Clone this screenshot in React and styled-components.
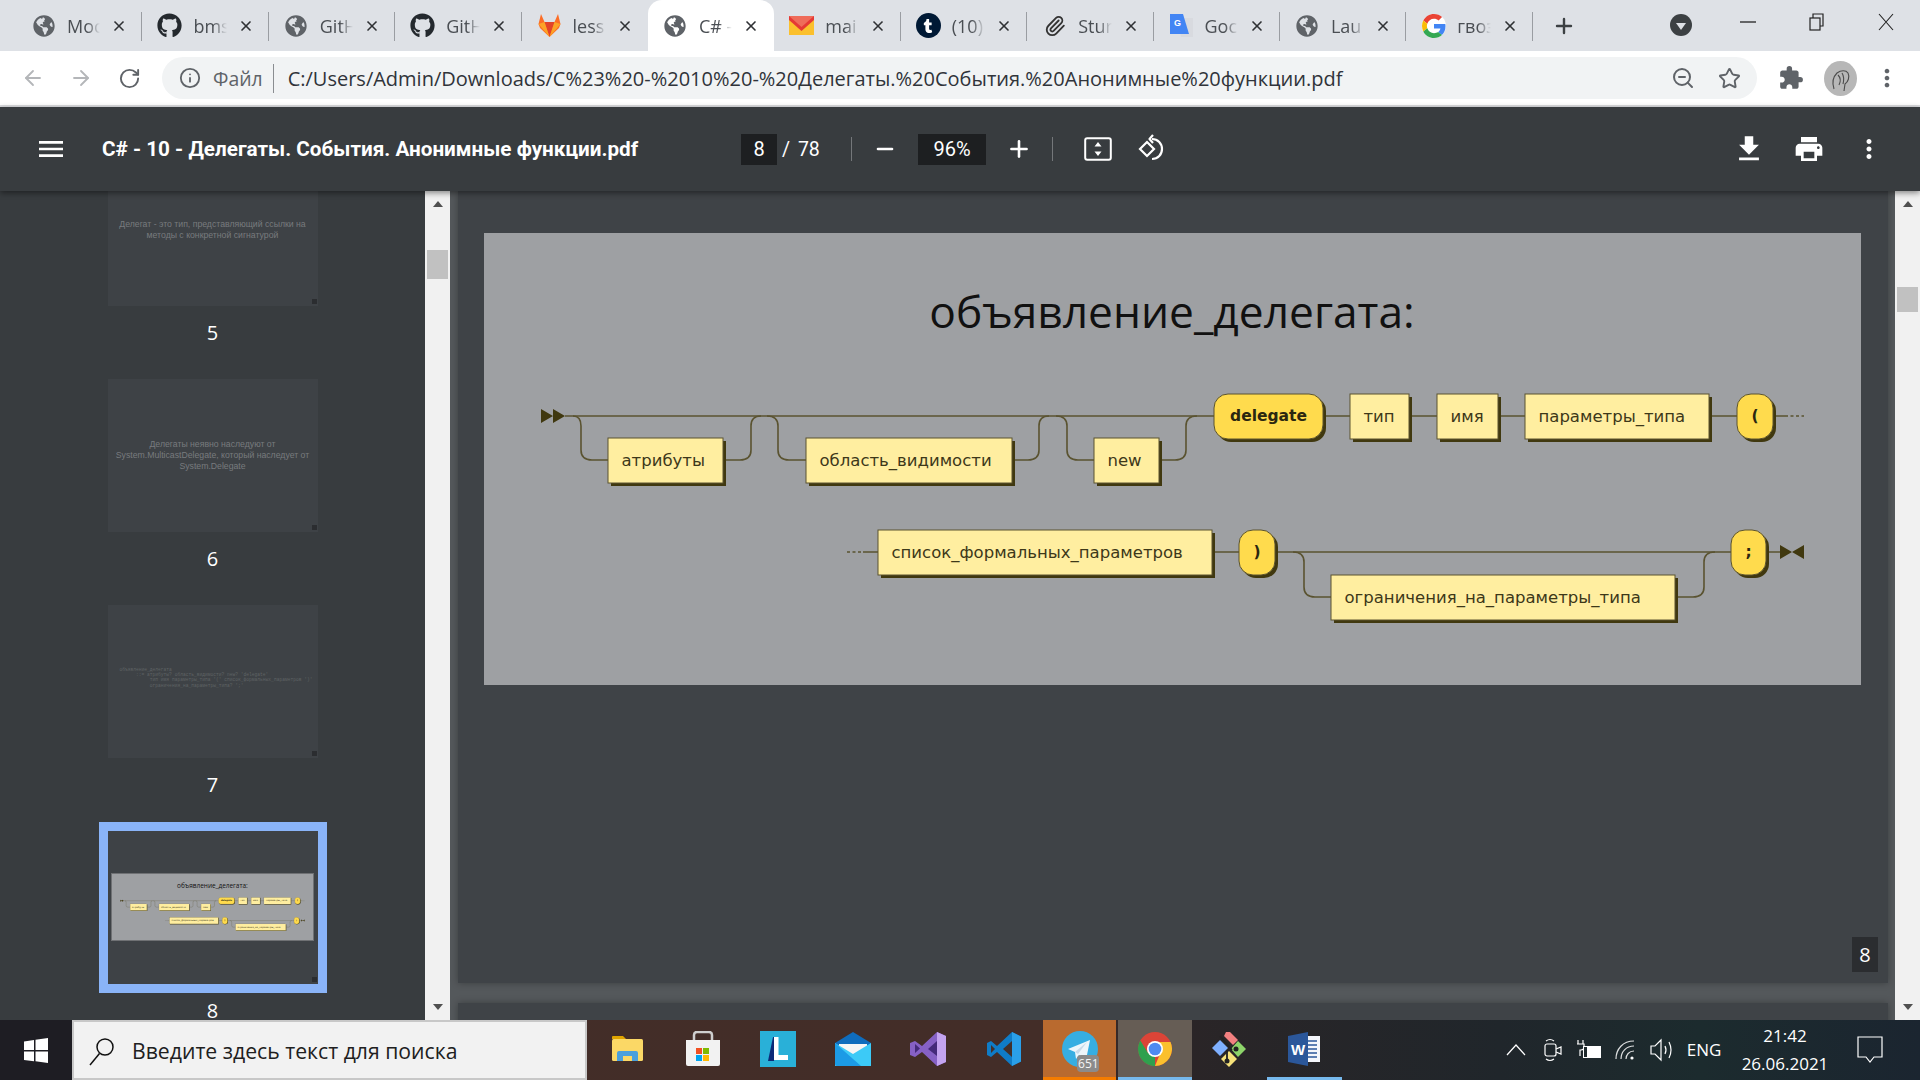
import styled, { createGlobalStyle } from "styled-components"
import { ArrowLeft, ArrowRight, RotateCw, Info, ZoomOut, Star, Plus, Minus, X, Paperclip } from "lucide-react"
import { FaGithub, FaGlobeAmericas, FaTumblr } from "react-icons/fa"
import { MdExtension, MdFileDownload, MdPrint, MdMoreVert, MdMenu } from "react-icons/md"

const Global = createGlobalStyle`
  html, body { margin: 0; padding: 0; height: 100%; overflow: hidden; background: #383c3f; }
  * { box-sizing: border-box; }
`

const Screen = styled.div`
  width: 1920px;
  height: 1080px;
  display: flex;
  flex-direction: column;
  overflow: hidden;
  font-family: "Open Sans", "Liberation Sans", sans-serif;
`

/* tabs */
const TabStrip = styled.div`
  height: 51px;
  flex: none;
  background: #dee1e6;
  display: flex;
  align-items: stretch;
  padding-left: 16px;
`
const Tab = styled.div`
  width: 126.4px;
  flex: none;
  position: relative;
  display: flex;
  align-items: center;
  gap: 11px;
  padding: 0 15px 0 15px;
  color: #4a4e53;
  font-size: 18px;
  background: ${p => (p.$active ? "#fff" : "transparent")};
  border-radius: ${p => (p.$active ? "14px 14px 0 0" : "0")};
  &::after {
    content: "";
    display: ${p => (p.$plain ? "none" : "block")};
    position: absolute;
    right: 0;
    top: 12px;
    height: 29px;
    width: 1px;
    background: #9a9da2;
  }
`
const TabIcon = styled.span`
  width: 25px;
  height: 25px;
  flex: none;
  display: flex;
  align-items: center;
  justify-content: center;
  color: ${p => p.$color || "#5f6368"};
`
const TabTitle = styled.span`
  flex: 1;
  min-width: 0;
  white-space: nowrap;
  -webkit-mask-image: linear-gradient(90deg, #000 60%, transparent 100%);
  mask-image: linear-gradient(90deg, #000 60%, transparent 100%);
`
const TabClose = styled(X)`
  flex: none;
  color: #2f3134;
`
const NewTab = styled.div`
  width: 62px;
  flex: none;
  display: flex;
  align-items: center;
  justify-content: center;
  color: #3c4043;
`
const TabSearch = styled.div`
  width: 22px;
  height: 22px;
  margin: 14px 0 0 75px;
  border-radius: 50%;
  background: #3c4043;
  display: flex;
  align-items: center;
  justify-content: center;
  flex: none;
  &::after {
    content: "";
    border-left: 5px solid transparent;
    border-right: 5px solid transparent;
    border-top: 7px solid #dee1e6;
    margin-top: 2px;
  }
`
const WindowButtons = styled.div`
  margin-left: auto;
  display: flex;
  align-items: flex-start;
  color: #222;
`
const WindowButton = styled.div`
  width: 69px;
  height: 44px;
  display: flex;
  align-items: center;
  justify-content: center;
`

/* address bar */
const NavBar = styled.div`
  height: 56px;
  flex: none;
  background: #fff;
  border-bottom: 2px solid #dcdde0;
  display: flex;
  align-items: center;
  padding-left: 9px;
`
const NavButton = styled.div`
  width: ${p => p.$w || 48}px;
  height: 40px;
  flex: none;
  display: flex;
  align-items: center;
  justify-content: center;
  color: ${p => p.$color || "#5f6368"};
`
const Omnibox = styled.div`
  width: 1595px;
  height: 42px;
  margin-left: 9px;
  flex: none;
  background: #f1f3f4;
  border-radius: 21px;
  display: flex;
  align-items: center;
  padding-left: 17px;
  padding-right: 4px;
  position: relative;
`
const InfoIcon = styled(Info)`
  color: #5f6368;
  flex: none;
`
const SchemeLabel = styled.span`
  margin-left: 12px;
  font-size: 19.4px;
  color: #5f6368;
  padding-right: 10px;
  border-right: 1px solid #8a8d91;
  line-height: 29px;
`
const Url = styled.span`
  margin-left: 14px;
  font-size: 20px;
  color: #30343a;
  white-space: nowrap;
  flex: 1;
`
const OmniIcon = styled.div`
  width: 47px;
  flex: none;
  display: flex;
  justify-content: center;
  color: #5f6368;
`
const NavRight = styled.div`
  display: flex;
  align-items: center;
  margin-left: 5px;
`

/* pdf toolbar */
const PdfBar = styled.div`
  height: 84px;
  flex: none;
  background: #383c3f;
  position: relative;
  z-index: 2;
  box-shadow: 0 2px 6px rgba(0, 0, 0, 0.45);
  display: flex;
  align-items: center;
  color: #fff;
  padding-left: 31px;
`
const BarIcon = styled.div`
  width: ${p => p.$w || 40}px;
  margin-left: ${p => p.$ml || 0}px;
  flex: none;
  display: flex;
  justify-content: center;
  align-items: center;
`
const DocTitle = styled.div`
  margin-left: 31px;
  width: 639px;
  flex: none;
  font-family: Roboto, "Liberation Sans", sans-serif;
  font-weight: 700;
  font-size: 20.7px;
  white-space: nowrap;
`
const DarkField = styled.div`
  width: ${p => p.$w}px;
  height: 31px;
  flex: none;
  background: #1d1f21;
  display: flex;
  align-items: center;
  justify-content: center;
  font-family: Roboto, "Liberation Sans", sans-serif;
  font-size: 20px;
`
const PageTotal = styled.div`
  width: 74px;
  flex: none;
  padding-left: 5px;
  font-family: Roboto, "Liberation Sans", sans-serif;
  font-size: 19.5px;
  word-spacing: 3px;
`
const BarDivider = styled.div`
  width: 1px;
  height: 24px;
  flex: none;
  background: #74777a;
`
const BarRight = styled.div`
  margin-left: auto;
  display: flex;
  align-items: center;
  padding-right: 21px;
`

/* content */
const Content = styled.div`
  flex: 1;
  min-height: 0;
  display: flex;
`
const Sidebar = styled.div`
  width: 425px;
  flex: none;
  background: #383c3f;
  overflow: hidden;
`
const ThumbList = styled.div`
  margin-top: -38px;
  display: flex;
  flex-direction: column;
  align-items: center;
`
const ThumbItem = styled.div`
  width: 228px;
  height: 226px;
  flex: none;
  display: flex;
  flex-direction: column;
  align-items: center;
`
const ThumbFrame = styled.div`
  width: 228px;
  height: 171px;
  margin-top: -9px;
  padding: 9px;
  background: ${p => (p.$selected ? "#8ab4f8" : "transparent")};
  flex: none;
`
const ThumbPage = styled.div`
  position: relative;
  height: 153px;
  background: #3e4246;
  display: flex;
  flex-direction: column;
  align-items: center;
  padding-top: ${p => p.$top || 0}px;
  text-align: center;
  font-family: "Liberation Sans", sans-serif;
  font-size: 8.7px;
  line-height: 11px;
  color: #787b7e;
  &::after {
    content: "";
    position: absolute;
    right: 1px;
    bottom: 2px;
    width: 5px;
    height: 5px;
    background: #2b2d30;
  }
`
const ThumbCode = styled.pre`
  margin: 0;
  align-self: flex-start;
  padding-left: 12px;
  text-align: left;
  font-family: "Liberation Mono", monospace;
  font-size: 4.6px;
  line-height: 5.2px;
  color: #5f6265;
`
const ThumbNumber = styled.div`
  margin-top: 9px;
  color: #fff;
  font-size: 20px;
  line-height: 18px;
  font-family: "Open Sans", sans-serif;
`
const ScrollTrack = styled.div`
  width: 25px;
  flex: none;
  background: #f1f1f1;
  display: flex;
  flex-direction: column;
  align-items: center;
`
const ArrowBox = styled.div`
  height: 26px;
  flex: none;
  display: flex;
  align-items: center;
  margin-top: ${p => (p.$down ? "auto" : "0")};
  &::after {
    content: "";
    border-left: 5.5px solid transparent;
    border-right: 5.5px solid transparent;
    ${p => (p.$down ? "border-top" : "border-bottom")}: 6px solid #505050;
  }
`
const ScrollThumb = styled.div`
  width: 21px;
  height: ${p => p.$h}px;
  margin-top: ${p => p.$top}px;
  background: #c1c1c1;
  flex: none;
`
const Viewer = styled.div`
  flex: 1;
  min-width: 0;
  background: #54585b;
  display: flex;
  flex-direction: column;
  gap: 20px;
  padding: 0 7px 0 8px;
  overflow: hidden;
`
const Page = styled.div`
  position: relative;
  height: ${p => (p.$h ? `${p.$h}px` : "auto")};
  flex: ${p => (p.$h ? "none" : "1")};
  background: #3f4347;
  box-shadow: 0 0 7px rgba(0, 0, 0, 0.3);
  padding: 42px 27px 0 26px;
`
const SlideBox = styled.div`
  background: #9ea0a3;
  line-height: 0;
`
const PageNumber = styled.div`
  position: absolute;
  right: 10px;
  bottom: 11px;
  width: 26px;
  height: 35px;
  background: #2b2d30;
  color: #fff;
  font-size: 20px;
  display: flex;
  align-items: center;
  justify-content: center;
`
const MiniSlide = styled.div`
  width: 203px;
  height: 68px;
  margin: 42px 0 0;
  background: #9ea0a3;
  border: 1px solid #6f7174;
  line-height: 0;
  flex: none;
`

/* diagram */
const BoxText = styled.text`
  font-family: "DejaVu Sans", sans-serif;
  font-size: ${p => (p.$bold ? 15.5 : 16.5)}px;
  font-weight: ${p => (p.$bold ? 700 : 400)};
  fill: ${p => (p.$bold ? "#2b2710" : "#3d3819")};
  text-anchor: ${p => (p.$bold ? "middle" : "start")};
  dominant-baseline: central;
`
const SlideTitle = styled.text`
  font-family: "Open Sans", "Liberation Sans", sans-serif;
  font-size: 44.3px;
  fill: #111;
  text-anchor: middle;
`

const FILL = "#ffeea0"
const TERM = "#ffdb4d"
const LINE = "#5a5330"
const SHADOW = "#40380f"

function Node({ x, y, w, h = 45, text, term, bold }) {
  const r = term ? 14 : 0
  return (
    <g>
      <rect x={x + 3} y={y + 3} width={w} height={h} rx={r} fill={SHADOW} />
      <rect x={x} y={y} width={w} height={h} rx={r} fill={term ? TERM : FILL} stroke={LINE} strokeWidth="1" />
      <BoxText x={bold ? x + w / 2 : x + 13.5} y={y + h / 2 - 0.5} $bold={bold}>{text}</BoxText>
    </g>
  )
}

function Diagram({ width, height }) {
  const wires = [
    "M565 416H1214",
    "M573 416Q581 416 581 426V450Q581 460 592 460H608",
    "M726 460H740Q751 460 751 450V426Q751 416 761 416",
    "M767 416Q778 416 778 426V450Q778 460 789 460H806",
    "M1015 460H1028Q1039 460 1039 450V426Q1039 416 1049 416",
    "M1056 416Q1067 416 1067 426V450Q1067 460 1078 460H1094",
    "M1162 460H1175Q1186 460 1186 450V426Q1186 416 1197 416",
    "M1326 416H1350M1412 416H1437M1501 416H1525M1712 416H1737M1776 416H1785",
    "M863 552H878M1215 552H1239M1278 552H1731M1769 552H1780",
    "M1293 552Q1304 552 1304 562V587Q1304 597 1315 597H1331",
    "M1678 597H1693Q1704 597 1704 587V562Q1704 552 1715 552",
  ]
  return (
    <svg width={width} height={height} viewBox="484 233 1377 452" style={{ display: "block" }}>
      <SlideTitle x="1172" y="328">объявление_делегата:</SlideTitle>
      <g fill="none" stroke={LINE} strokeWidth="1.6">
        {wires.map(d => <path key={d} d={d} />)}
        <path d="M1785 416H1804M847 552H863" strokeDasharray="3 2.5" />
      </g>
      <g fill={SHADOW}>
        <path d="M541 409L553 416L541 423Z M553 409L565 416L553 423Z" />
        <path d="M1780 545L1792 552L1780 559Z M1804 545L1792 552L1804 559Z" />
      </g>
      <Node x={608} y={438} w={115} text="атрибуты" />
      <Node x={806} y={438} w={206} text="область_видимости" />
      <Node x={1094} y={438} w={65} text="new" />
      <Node x={1214} y={394} w={109} text="delegate" term bold />
      <Node x={1350} y={394} w={59} text="тип" />
      <Node x={1437} y={394} w={61} text="имя" />
      <Node x={1525} y={394} w={184} text="параметры_типа" />
      <Node x={1737} y={394} w={36} text="(" term bold />
      <Node x={878} y={530} w={334} text="список_формальных_параметров" />
      <Node x={1239} y={530} w={36} text=")" term bold />
      <Node x={1331} y={575} w={344} text="ограничения_на_параметры_типа" />
      <Node x={1731} y={530} w={35} text=";" term bold />
    </svg>
  )
}

/* taskbar */
const Taskbar = styled.div`
  height: 60px;
  flex: none;
  display: flex;
  color: #fff;
  background: linear-gradient(90deg, #1e1d23 0, #1e1d23 72px, #422d28 72px, #432d28 1040px, #2a2527 1190px, #20262b 1500px, #1c2b2e 1700px, #1b2530 1920px);
`
const StartButton = styled.div`
  width: 72px;
  flex: none;
  display: flex;
  align-items: center;
  justify-content: center;
`
const SearchBox = styled.div`
  width: 515px;
  flex: none;
  background: #f2f2f2;
  border: 2px solid #c8c8c8;
  display: flex;
  align-items: center;
  padding: 1px 0 0 14px;
  gap: 16px;
  color: #202020;
  font-size: 21.2px;
`
const Apps = styled.div`
  display: flex;
  margin-left: 3px;
`
const AppSlot = styled.div`
  position: relative;
  width: 75.2px;
  flex: none;
  display: flex;
  align-items: center;
  justify-content: center;
  background: ${p => p.$bg || "transparent"};
  background-clip: padding-box;
  border-left: ${p => (p.$bg ? "2px solid transparent" : "0")};
  padding-bottom: 2px;
  &::after {
    content: "";
    display: ${p => (p.$bar ? "block" : "none")};
    position: absolute;
    left: 0;
    right: 0;
    bottom: 0;
    height: 3px;
    background: ${p => p.$bar};
  }
`
const Badge = styled.span`
  position: absolute;
  right: 17px;
  bottom: 8px;
  width: 22px;
  height: 17px;
  border-radius: 4px;
  background: #8b8b8b;
  color: #f5f5f5;
  font-size: 12px;
  line-height: 17px;
  text-align: center;
`
const Tray = styled.div`
  margin-left: auto;
  display: flex;
  padding-right: 22px;
`
const TraySlot = styled.div`
  width: ${p => p.$w || 37}px;
  flex: none;
  display: flex;
  flex-direction: column;
  align-items: center;
  justify-content: center;
  font-size: ${p => p.$size || 17}px;
  line-height: 28px;
  white-space: nowrap;
`
const TumblrBadge = styled.span`
  width: 25px;
  height: 25px;
  border-radius: 50%;
  background: #001935;
  display: flex;
  align-items: center;
  justify-content: center;
`

const Globe = () => <FaGlobeAmericas size={22} />

function GitlabIcon() {
  return (
    <svg width="25" height="25" viewBox="0 0 25 25">
      <path d="M12.5 24L3 15l-1.5-4L4 1l3.5 8h10L21 1l2.500 10-1.500 4z" fill="#fc6d26" />
      <path d="M12.500 24L7.500 9h10z" fill="#e24329" />
      <path d="M12.500 24L1.500 11l6-2zM12.500 24l11-13-6-2z" fill="#fca326" />
    </svg>
  )
}
function GmailIcon() {
  return (
    <svg width="25" height="25" viewBox="0 0 25 25">
      <rect x="0" y="3" width="25" height="19" fill="#fbc02d" />
      <path d="M0 3h25v4L12.500 18 0 7z" fill="#e53935" />
      <path d="M0 3l12.500 11L25 3z" fill="#ef6c5a" />
    </svg>
  )
}
function TranslateIcon() {
  return (
    <svg width="25" height="25" viewBox="0 0 25 25">
      <path d="M9 5h15v19H12z" fill="#d8dadf" />
      <path d="M1 1h13l6 20H1z" fill="#4285f4" />
      <text x="5" y="13" fontSize="9" fontWeight="700" fill="#fff" fontFamily="Liberation Sans">G</text>
    </svg>
  )
}
function GoogleIcon() {
  return (
    <svg width="24" height="24" viewBox="0 0 48 48">
      <circle cx="24" cy="24" r="24" fill="#fff" />
      <path fill="#EA4335" d="M24 9.500c3.500 0 6.700 1.200 9.200 3.600l6.900-6.900C35.900 2.400 30.500 0 24 0 14.600 0 6.500 5.400 2.600 13.200l8 6.200C12.400 13.700 17.700 9.500 24 9.500z" />
      <path fill="#4285F4" d="M47 24.500c0-1.600-.1-3.100-.4-4.500H24v9h12.900c-.6 3-2.200 5.500-4.800 7.200l7.700 6c4.500-4.200 7.200-10.400 7.200-17.700z" />
      <path fill="#FBBC05" d="M10.600 28.600c-.5-1.400-.8-3-.8-4.600s.3-3.200.8-4.600l-8-6.200C.9 16.500 0 20.100 0 24s.9 7.500 2.600 10.800z" />
      <path fill="#34A853" d="M24 48c6.500 0 11.900-2.100 15.900-5.800l-7.700-6c-2.200 1.400-4.900 2.300-8.200 2.300-6.300 0-11.600-4.200-13.400-9.900l-8 6.200C6.500 42.600 14.600 48 24 48z" />
    </svg>
  )
}
function RestoreIcon() {
  return (
    <svg width="16" height="18" viewBox="0 0 16 18" fill="none" stroke="#222" strokeWidth="1.2">
      <rect x="1" y="5" width="10" height="12" />
      <path d="M4 5V1h10v12h-3" />
    </svg>
  )
}
function CloseThin() {
  return (
    <svg width="18" height="18" viewBox="0 0 18 18" stroke="#222" strokeWidth="1.1"><path d="M2 1l14 16M16 1L2 17" /></svg>
  )
}
function MinimizeThin() {
  return <svg width="16" height="4" viewBox="0 0 16 4" stroke="#222" strokeWidth="1.3"><path d="M0 2h16" /></svg>
}
function FitIcon() {
  return (
    <svg width="28" height="24" viewBox="0 0 28 24" fill="none">
      <rect x="1.200" y="1.200" width="25.600" height="21.600" rx="2" stroke="#fff" strokeWidth="2" />
      <path d="M14 5l3.500 4.500h-7zM14 19l3.500-4.500h-7z" fill="#fff" />
    </svg>
  )
}
function RotateIcon() {
  return (
    <svg width="28" height="30" viewBox="0 0 28 30" fill="none" stroke="#fff" strokeWidth="2.200">
      <path d="M10 8l7 7-7 7-7-7z" />
      <path d="M15 5c6 0 10 4.500 10 10s-4 10-10 10" />
      <path d="M16 1l-3.500 4 3.500 4" strokeLinejoin="round" />
    </svg>
  )
}
function Avatar() {
  return (
    <svg width="33" height="35" viewBox="0 0 33 35">
      <ellipse cx="16.500" cy="17.500" rx="16.500" ry="17.500" fill="#b7b7b7" />
      <path d="M10 28c-2-6-1-12 3-16 4-3 9-3 11 0 2 4 0 9-3 11l-1 7M14 14c2 2 3 6 1 10M18 12c2 3 2 7 1 11" fill="none" stroke="#4b4b4b" strokeWidth="1.100" />
    </svg>
  )
}
function WindowsLogo() {
  return (
    <svg width="24" height="25" viewBox="0 0 24 25" fill="#fff">
      <path d="M0 3.500L10 2v10H0zM11.500 1.800L24 0v12H11.500zM0 13.500h10v9.800L0 22zM11.500 13.500H24V25l-12.500-1.800z" />
    </svg>
  )
}
function SearchGlyph() {
  return (
    <svg width="28" height="30" viewBox="0 0 28 30" fill="none" stroke="#111" strokeWidth="1.500">
      <circle cx="17" cy="11" r="8" />
      <path d="M11.500 17.500L2 29" />
    </svg>
  )
}
function FolderIcon() {
  return (
    <svg width="33" height="28" viewBox="0 0 33 28">
      <path d="M1 2a1 1 0 011-1h10l3 3h-14z" fill="#e0a400" />
      <rect x="1" y="4" width="31" height="22" rx="1.500" fill="#fbd866" />
      <path d="M6 26v-8q0-2 2-2h17q2 0 2 2v8h-6v-5h-9v5z" fill="#4ba0dc" />
    </svg>
  )
}
function StoreIcon() {
  return (
    <svg width="36" height="36" viewBox="0 0 36 36">
      <path d="M9 11V4q0-3 3-3h12q3 0 3 3v7" fill="none" stroke="#cfcfcf" strokeWidth="2.500" />
      <path d="M1 9h34v24q0 2-2 2H3q-2 0-2-2z" fill="#f2f2f2" />
      <rect x="11" y="17" width="6" height="6" fill="#f25022" />
      <rect x="18" y="17" width="6" height="6" fill="#7fba00" />
      <rect x="11" y="24" width="6" height="6" fill="#00a4ef" />
      <rect x="18" y="24" width="6" height="6" fill="#ffb900" />
    </svg>
  )
}
function LIcon() {
  return (
    <svg width="36" height="36" viewBox="0 0 36 36">
      <rect width="36" height="36" fill="#29b0d8" />
      <path d="M13 6h4l-3 24H8z" fill="#0c2a78" />
      <path d="M14 6h4.500v18H28v5H14z" fill="#fff" />
    </svg>
  )
}
function MailIcon() {
  return (
    <svg width="36" height="34" viewBox="0 0 36 34">
      <path d="M0 11L18 0l18 11v23H0z" fill="#0f6cbd" />
      <path d="M4 12h28v9L18 27 4 21z" fill="#f5f5f5" />
      <path d="M0 11l18 11 18-11v23H0z" fill="#3ccaf7" />
      <path d="M0 11l26 23H2q-2 0-2-2z" fill="#1c9be6" />
    </svg>
  )
}
function VsIcon() {
  return (
    <svg width="36" height="36" viewBox="0 0 36 36">
      <path d="M27 1l9 4v26l-9 4-15-14-7 5-5-2V12l5-2 7 5z" fill="#8661c5" />
      <path d="M27 1l9 4v26l-9 4z" fill="#c4a4f0" />
      <path d="M5 13v9l5-4.500zM27 10l-9 8 9 7z" fill="#442a7a" />
    </svg>
  )
}
function CodeIcon() {
  return (
    <svg width="34" height="36" viewBox="0 0 34 36">
      <path d="M25 1l9 4.500v25L25 35 10 21l-6 5-4-2V12l4-2 6 5z" fill="#0f7cc7" />
      <path d="M25 1l9 4.500v25L25 35z" fill="#2a9fe8" />
      <path d="M4 14v8l4-4zM25 10l-9 8 9 8z" fill="#43302a" />
    </svg>
  )
}
function TelegramIcon() {
  return (
    <svg width="36" height="36" viewBox="0 0 36 36">
      <circle cx="18" cy="18" r="18" fill="#37aee2" />
      <path d="M6 18L28 9l-4 20-7-5-3 4-1-7z" fill="#eef6fb" />
      <path d="M13 21l12-10-9 12z" fill="#c8daea" />
    </svg>
  )
}
function ChromeIcon() {
  return (
    <svg width="34" height="34" viewBox="0 0 34 34">
      <circle cx="17" cy="17" r="17" fill="#db4437" />
      <path d="M17 34A17 17 0 012.300 8.500L10 21l7-4z" fill="#2fa04e" />
      <path d="M17 34L24 17l-7-7h15.500A17 17 0 0117 34z" fill="#fbc02d" />
      <circle cx="17" cy="17" r="8" fill="#fff" />
      <circle cx="17" cy="17" r="6.300" fill="#4f8af0" />
    </svg>
  )
}
function GitExtIcon() {
  return (
    <svg width="36" height="36" viewBox="0 0 36 36">
      <path d="M19 1l8 8-5 5-9-9 2-4z" fill="#f28080" />
      <path d="M9 9l8 8-8 8-8-8z" fill="#7fb0ff" />
      <path d="M27 10l8 8-8 8-7-8z" fill="#8dd46a" />
      <path d="M18 20l8 8-8 8-8-8z" fill="#f6e27a" />
      <path d="M9 5l12 14M16 19v10" stroke="#222" strokeWidth="1.800" fill="none" />
      <circle cx="25" cy="18" r="2.500" fill="#222" />
      <circle cx="16" cy="30" r="2.500" fill="#222" />
    </svg>
  )
}
function WordIcon() {
  return (
    <svg width="32" height="34" viewBox="0 0 32 34">
      <rect x="12" y="4" width="20" height="26" fill="#f4f6fb" />
      <path d="M17 9h12M17 13h12M17 17h12M17 21h12M17 25h12" stroke="#2b579a" strokeWidth="1.600" />
      <path d="M0 4l20-4v34L0 30z" fill="#2b579a" />
      <text x="3" y="23" fontSize="15" fontWeight="700" fill="#fff" fontFamily="Liberation Sans">W</text>
    </svg>
  )
}
const trayStroke = { fill: "none", stroke: "#fff", strokeWidth: 1.2 }
function TrayChevron() {
  return <svg width="20" height="12" viewBox="0 0 20 12" {...trayStroke}><path d="M1 11l9-10 9 10" /></svg>
}
function TrayCamera() {
  return (
    <svg width="18" height="24" viewBox="0 0 18 24" {...trayStroke}>
      <rect x="1" y="6" width="11" height="12" rx="2" />
      <path d="M12 11l5-2v7l-5-2M2 3q4-3 8 0M2 21q4 3 8 0" />
    </svg>
  )
}
function TrayBattery() {
  return (
    <svg width="24" height="22" viewBox="0 0 24 22">
      <path d="M1 1v4M6 1v4M0 5h7v3q0 3-3 3h-1v6" fill="none" stroke="#fff" strokeWidth="1.200" />
      <rect x="6" y="7" width="18" height="12" fill="#fff" />
      <rect x="7" y="8" width="3" height="10" fill="#1f2a2d" />
    </svg>
  )
}
function TrayWifi() {
  return (
    <svg width="20" height="20" viewBox="0 0 20 20" {...trayStroke}>
      <path d="M1 19C1 9 8 1 19 1M6 19c0-7 5-13 13-13M11 19c0-4 3-8 8-8" strokeOpacity=".85" />
      <circle cx="17" cy="18" r="1.600" fill="#fff" stroke="none" />
    </svg>
  )
}
function TraySound() {
  return (
    <svg width="24" height="26" viewBox="0 0 24 26" {...trayStroke}>
      <path d="M1 9h4l6-6v20l-6-6H1zM15 9q2 4 0 8M19 5q4 8 0 16" />
    </svg>
  )
}
function Notification() {
  return (
    <svg width="26" height="28" viewBox="0 0 26 28" {...trayStroke}>
      <path d="M1 1h24v20H17l-4 5-4-5H1z" />
    </svg>
  )
}

const tabs = [
  { icon: <Globe />, title: "Moc" },
  { icon: <FaGithub size={25} color="#24292e" />, title: "bms" },
  { icon: <Globe />, title: "GitH" },
  { icon: <FaGithub size={25} color="#24292e" />, title: "GitH" },
  { icon: <GitlabIcon />, title: "less", plain: true },
  { icon: <Globe />, title: "C# -", active: true, plain: true },
  { icon: <GmailIcon />, title: "mai" },
  { icon: <TumblrBadge><FaTumblr size={14} color="#fff" /></TumblrBadge>, title: "(10)" },
  { icon: <Paperclip size={22} color="#333" />, title: "Stur" },
  { icon: <TranslateIcon />, title: "Goc" },
  { icon: <Globe />, title: "Lau" },
  { icon: <GoogleIcon />, title: "гвоз" },
]

const thumbs = [
  { n: 5, top: 66, body: <>Делегат - это тип, представляющий ссылки на<br />методы с конкретной сигнатурой</> },
  { n: 6, top: 60, body: <>Делегаты неявно наследуют от<br />System.MulticastDelegate, который наследует от<br />System.Delegate</> },
  {
    n: 7,
    top: 62,
    body: (
      <ThumbCode>{`объявление_делегата
      ::= атрибуты? область_видимости? new? 'delegate'
           тип имя параметры_типа '(' список_формальных_параметров ')'
           ограничения_на_параметры_типа? ';'`}</ThumbCode>
    ),
  },
]

export default function App() {
  return (
    <Screen>
      <Global />
      <TabStrip>
        {tabs.map((t, i) => (
          <Tab key={i} $active={t.active} $plain={t.plain}>
            <TabIcon>{t.icon}</TabIcon>
            <TabTitle>{t.title}</TabTitle>
            <TabClose size={16} strokeWidth={2.5} />
          </Tab>
        ))}
        <NewTab><Plus size={24} strokeWidth={2.4} /></NewTab>
        <TabSearch />
        <WindowButtons>
          <WindowButton><MinimizeThin /></WindowButton>
          <WindowButton><RestoreIcon /></WindowButton>
          <WindowButton><CloseThin /></WindowButton>
        </WindowButtons>
      </TabStrip>

      <NavBar>
        <NavButton $color="#b4b6b9"><ArrowLeft size={24} strokeWidth={1.8} /></NavButton>
        <NavButton $color="#b4b6b9"><ArrowRight size={24} strokeWidth={1.8} /></NavButton>
        <NavButton><RotateCw size={23} strokeWidth={2} /></NavButton>
        <Omnibox>
          <InfoIcon size={22} strokeWidth={2} />
          <SchemeLabel>Файл</SchemeLabel>
          <Url>C:/Users/Admin/Downloads/C%23%20-%2010%20-%20Делегаты.%20События.%20Анонимные%20функции.pdf</Url>
          <OmniIcon><ZoomOut size={24} strokeWidth={2} /></OmniIcon>
          <OmniIcon><Star size={23} strokeWidth={2} /></OmniIcon>
        </Omnibox>
        <NavRight>
          <NavButton $w={58}><MdExtension size={26} /></NavButton>
          <NavButton $w={40}><Avatar /></NavButton>
          <NavButton $w={54}><MdMoreVert size={28} /></NavButton>
        </NavRight>
      </NavBar>

      <PdfBar>
        <BarIcon><MdMenu size={32} /></BarIcon>
        <DocTitle>C# - 10 - Делегаты. События. Анонимные функции.pdf</DocTitle>
        <DarkField $w={36}>8</DarkField>
        <PageTotal>/ 78</PageTotal>
        <BarDivider />
        <BarIcon $w={66}><Minus size={24} strokeWidth={2.6} /></BarIcon>
        <DarkField $w={68}>96%</DarkField>
        <BarIcon $w={66}><Plus size={26} strokeWidth={2.4} /></BarIcon>
        <BarDivider />
        <BarIcon $w={60} $ml={15}><FitIcon /></BarIcon>
        <BarIcon $w={46}><RotateIcon /></BarIcon>
        <BarRight>
          <BarIcon $w={60}><MdFileDownload size={34} /></BarIcon>
          <BarIcon $w={60}><MdPrint size={32} /></BarIcon>
          <BarIcon $w={60}><MdMoreVert size={30} /></BarIcon>
        </BarRight>
      </PdfBar>

      <Content>
        <Sidebar>
          <ThumbList>
            {thumbs.map(t => (
              <ThumbItem key={t.n}>
                <ThumbFrame>
                  <ThumbPage $top={t.top}>{t.body}</ThumbPage>
                </ThumbFrame>
                <ThumbNumber>{t.n}</ThumbNumber>
              </ThumbItem>
            ))}
            <ThumbItem>
              <ThumbFrame $selected>
                <ThumbPage>
                  <MiniSlide><Diagram width={201} height={66} /></MiniSlide>
                </ThumbPage>
              </ThumbFrame>
              <ThumbNumber>8</ThumbNumber>
            </ThumbItem>
          </ThumbList>
        </Sidebar>
        <ScrollTrack>
          <ArrowBox />
          <ScrollThumb $top={33} $h={29} />
          <ArrowBox $down />
        </ScrollTrack>
        <Viewer>
          <Page $h={792}>
            <SlideBox><Diagram width={1377} height={452} /></SlideBox>
            <PageNumber>8</PageNumber>
          </Page>
          <Page />
        </Viewer>
        <ScrollTrack>
          <ArrowBox />
          <ScrollThumb $top={70} $h={25} />
          <ArrowBox $down />
        </ScrollTrack>
      </Content>

      <Taskbar>
        <StartButton><WindowsLogo /></StartButton>
        <SearchBox><SearchGlyph />Введите здесь текст для поиска</SearchBox>
        <Apps>
          <AppSlot><FolderIcon /></AppSlot>
          <AppSlot><StoreIcon /></AppSlot>
          <AppSlot><LIcon /></AppSlot>
          <AppSlot><MailIcon /></AppSlot>
          <AppSlot><VsIcon /></AppSlot>
          <AppSlot><CodeIcon /></AppSlot>
          <AppSlot $bg="#b96a2f" $bar="#f57c00"><TelegramIcon /><Badge>651</Badge></AppSlot>
          <AppSlot $bg="#665d55" $bar="#76b9ed"><ChromeIcon /></AppSlot>
          <AppSlot><GitExtIcon /></AppSlot>
          <AppSlot $bar="#76b9ed"><WordIcon /></AppSlot>
        </Apps>
        <Tray>
          <TraySlot><TrayChevron /></TraySlot>
          <TraySlot><TrayCamera /></TraySlot>
          <TraySlot $w={35}><TrayBattery /></TraySlot>
          <TraySlot><TrayWifi /></TraySlot>
          <TraySlot><TraySound /></TraySlot>
          <TraySlot $w={48}>ENG</TraySlot>
          <TraySlot $w={114}><span>21:42</span><span>26.06.2021</span></TraySlot>
          <TraySlot $w={56}><Notification /></TraySlot>
        </Tray>
      </Taskbar>
    </Screen>
  )
}
